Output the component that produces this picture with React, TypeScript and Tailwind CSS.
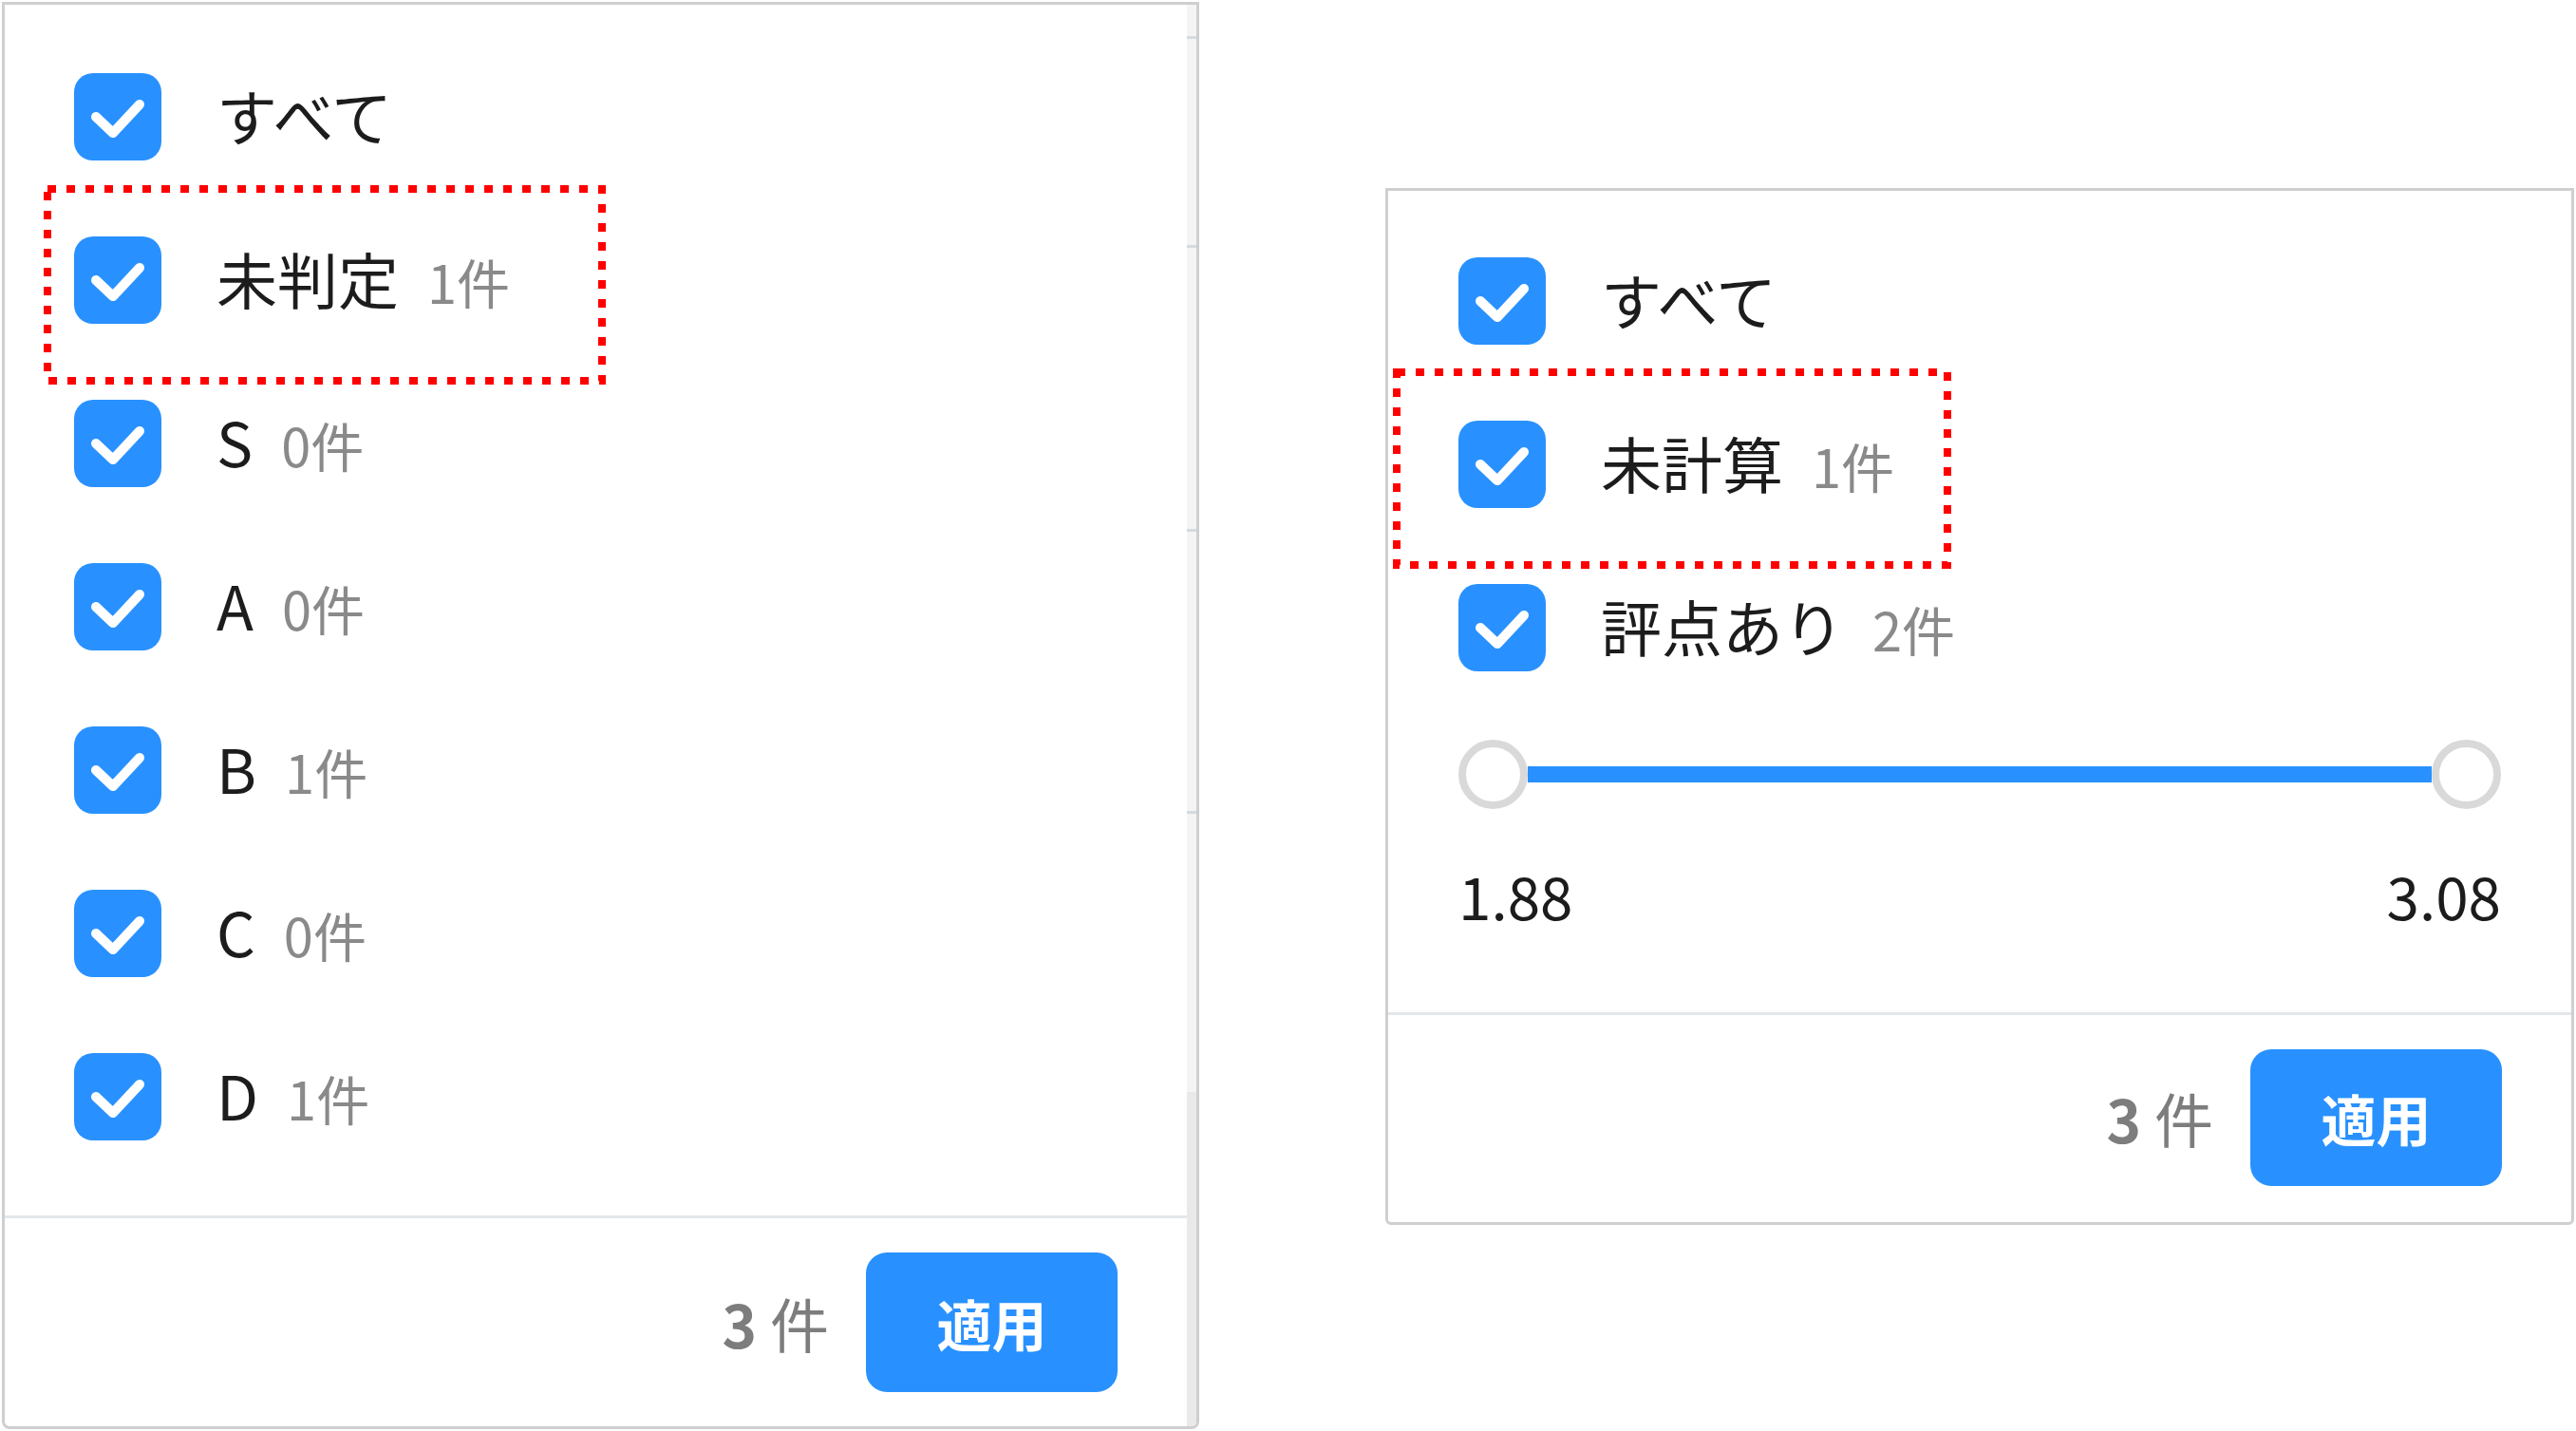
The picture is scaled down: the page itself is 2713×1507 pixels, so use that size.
import type { ReactNode } from "react";

// two filter dropdowns side by side, red dotted marks are annotations

const LEFT_ROWS = [
  { label: "すべて" },
  { label: "未判定", count: "1件", mark: true },
  { label: "S", count: "0件" },
  { label: "A", count: "0件" },
  { label: "B", count: "1件" },
  { label: "C", count: "0件" },
  { label: "D", count: "1件" },
];

const RIGHT_ROWS = [
  { label: "すべて" },
  { label: "未計算", count: "1件", mark: true },
  { label: "評点あり", count: "2件" },
];

function CheckBox() {
  return (
    <div className="flex h-[92px] w-[92px] shrink-0 items-center justify-center rounded-[20px] bg-[#2991ff]">
      <svg width="92" height="92" viewBox="0 0 92 92" fill="none">
        <path
          d="M23 46 L41 63 L69 33"
          stroke="#ffffff"
          strokeWidth="10"
          strokeLinecap="round"
          strokeLinejoin="round"
        />
      </svg>
    </div>
  );
}

// red dotted annotation frame drawn over a row
function Mark({ className }: { className: string }) {
  return (
    <div className={`pointer-events-none absolute ${className}`}>
      <div className="absolute inset-[4px]">
        <svg className="h-full w-full overflow-visible">
          <rect
            width="100%"
            height="100%"
            fill="none"
            stroke="#ff0000"
            strokeWidth="8"
            strokeDasharray="9 11"
          />
        </svg>
      </div>
    </div>
  );
}

function Row({ label, count, mark }: { label: string; count?: string; mark?: ReactNode }) {
  return (
    <div className="relative flex h-[172px] items-center">
      <CheckBox />
      <div className="mb-[6px] ml-[58px] flex items-baseline">
        <span className="text-[64px] leading-none text-[#1c1c1c]">{label}</span>
        {count && (
          <span className="ml-[30px] text-[56px] leading-none text-[#8a8a8a]">{count}</span>
        )}
      </div>
      {mark}
    </div>
  );
}

function Footer({ h }: { h: string }) {
  return (
    <div className="flex items-center justify-end gap-[39px]">
      <span className="text-[62px] leading-none text-[#7d7d7d]">
        <span className="font-bold">3</span> 件
      </span>
      <button
        className={`flex w-[265px] ${h} items-center justify-center rounded-[22px] bg-[#2991ff] text-[58px] font-bold leading-none text-white`}
      >
        適用
      </button>
    </div>
  );
}

export default function App() {
  return (
    <div className="flex h-[1507px] w-[2713px] items-start bg-white pl-[2px] pt-[2px] font-['Noto_Sans_CJK_JP','Noto_Sans',sans-serif]">
      {/* grade filter */}
      <div className="flex h-[1503px] w-[1261px] overflow-hidden rounded-b-[8px] border-[3px] border-[#cfcfcf] bg-white">
        <div className="flex flex-1 flex-col">
          <div className="px-[73px] pb-[39px] pt-[32px]">
            {LEFT_ROWS.map((r) => (
              <Row
                key={r.label}
                label={r.label}
                count={r.count}
                mark={r.mark ? <Mark className="left-[-32px] top-[-14px] h-[210px] w-[592px]" /> : undefined}
              />
            ))}
          </div>
          <div className="h-[3px] bg-[#e3e7ea]" />
          <div className="px-[73px] pt-[36px]">
            <Footer h="h-[147px]" />
          </div>
        </div>
        {/* scrollbar of the list behind */}
        <div className="flex w-[10px] flex-col bg-[#f4f4f4]">
          <div className="h-[33px]" />
          <div className="h-[3px] bg-[#d3dbe0]" />
          <div className="h-[217px]" />
          <div className="h-[3px] bg-[#d3dbe0]" />
          <div className="h-[296px]" />
          <div className="h-[3px] bg-[#d3dbe0]" />
          <div className="h-[294px]" />
          <div className="h-[3px] bg-[#d3dbe0]" />
          <div className="h-[293px]" />
          <div className="flex-1 bg-[#e9e9e9]" />
        </div>
      </div>

      {/* score filter */}
      <div className="ml-[196px] mt-[196px] flex h-[1092px] w-[1252px] flex-col rounded-b-[6px] border-[3px] border-[#cfcfcf] bg-white">
        <div className="px-[74px] pb-[88px] pt-[30px]">
          {RIGHT_ROWS.map((r) => (
            <Row
              key={r.label}
              label={r.label}
              count={r.count}
              mark={r.mark ? <Mark className="left-[-69px] top-[-15px] h-[211px] w-[588px]" /> : undefined}
            />
          ))}
          <div className="mt-[32px] flex h-[73px] items-center">
            <div className="h-[73px] w-[73px] shrink-0 rounded-full border-[8px] border-[#d9d9d9] bg-white" />
            <div className="h-[17px] flex-1 bg-[#2991ff]" />
            <div className="h-[73px] w-[73px] shrink-0 rounded-full border-[8px] border-[#d9d9d9] bg-white" />
          </div>
          <div className="mt-[58px] mb-[4px] flex justify-between text-[62px] leading-[64px] text-[#1c1c1c]">
            <span>1.88</span>
            <span>3.08</span>
          </div>
        </div>
        <div className="h-[3px] bg-[#e3e7ea]" />
        <div className="px-[73px] pt-[36px]">
          <Footer h="h-[144px]" />
        </div>
      </div>
    </div>
  );
}
